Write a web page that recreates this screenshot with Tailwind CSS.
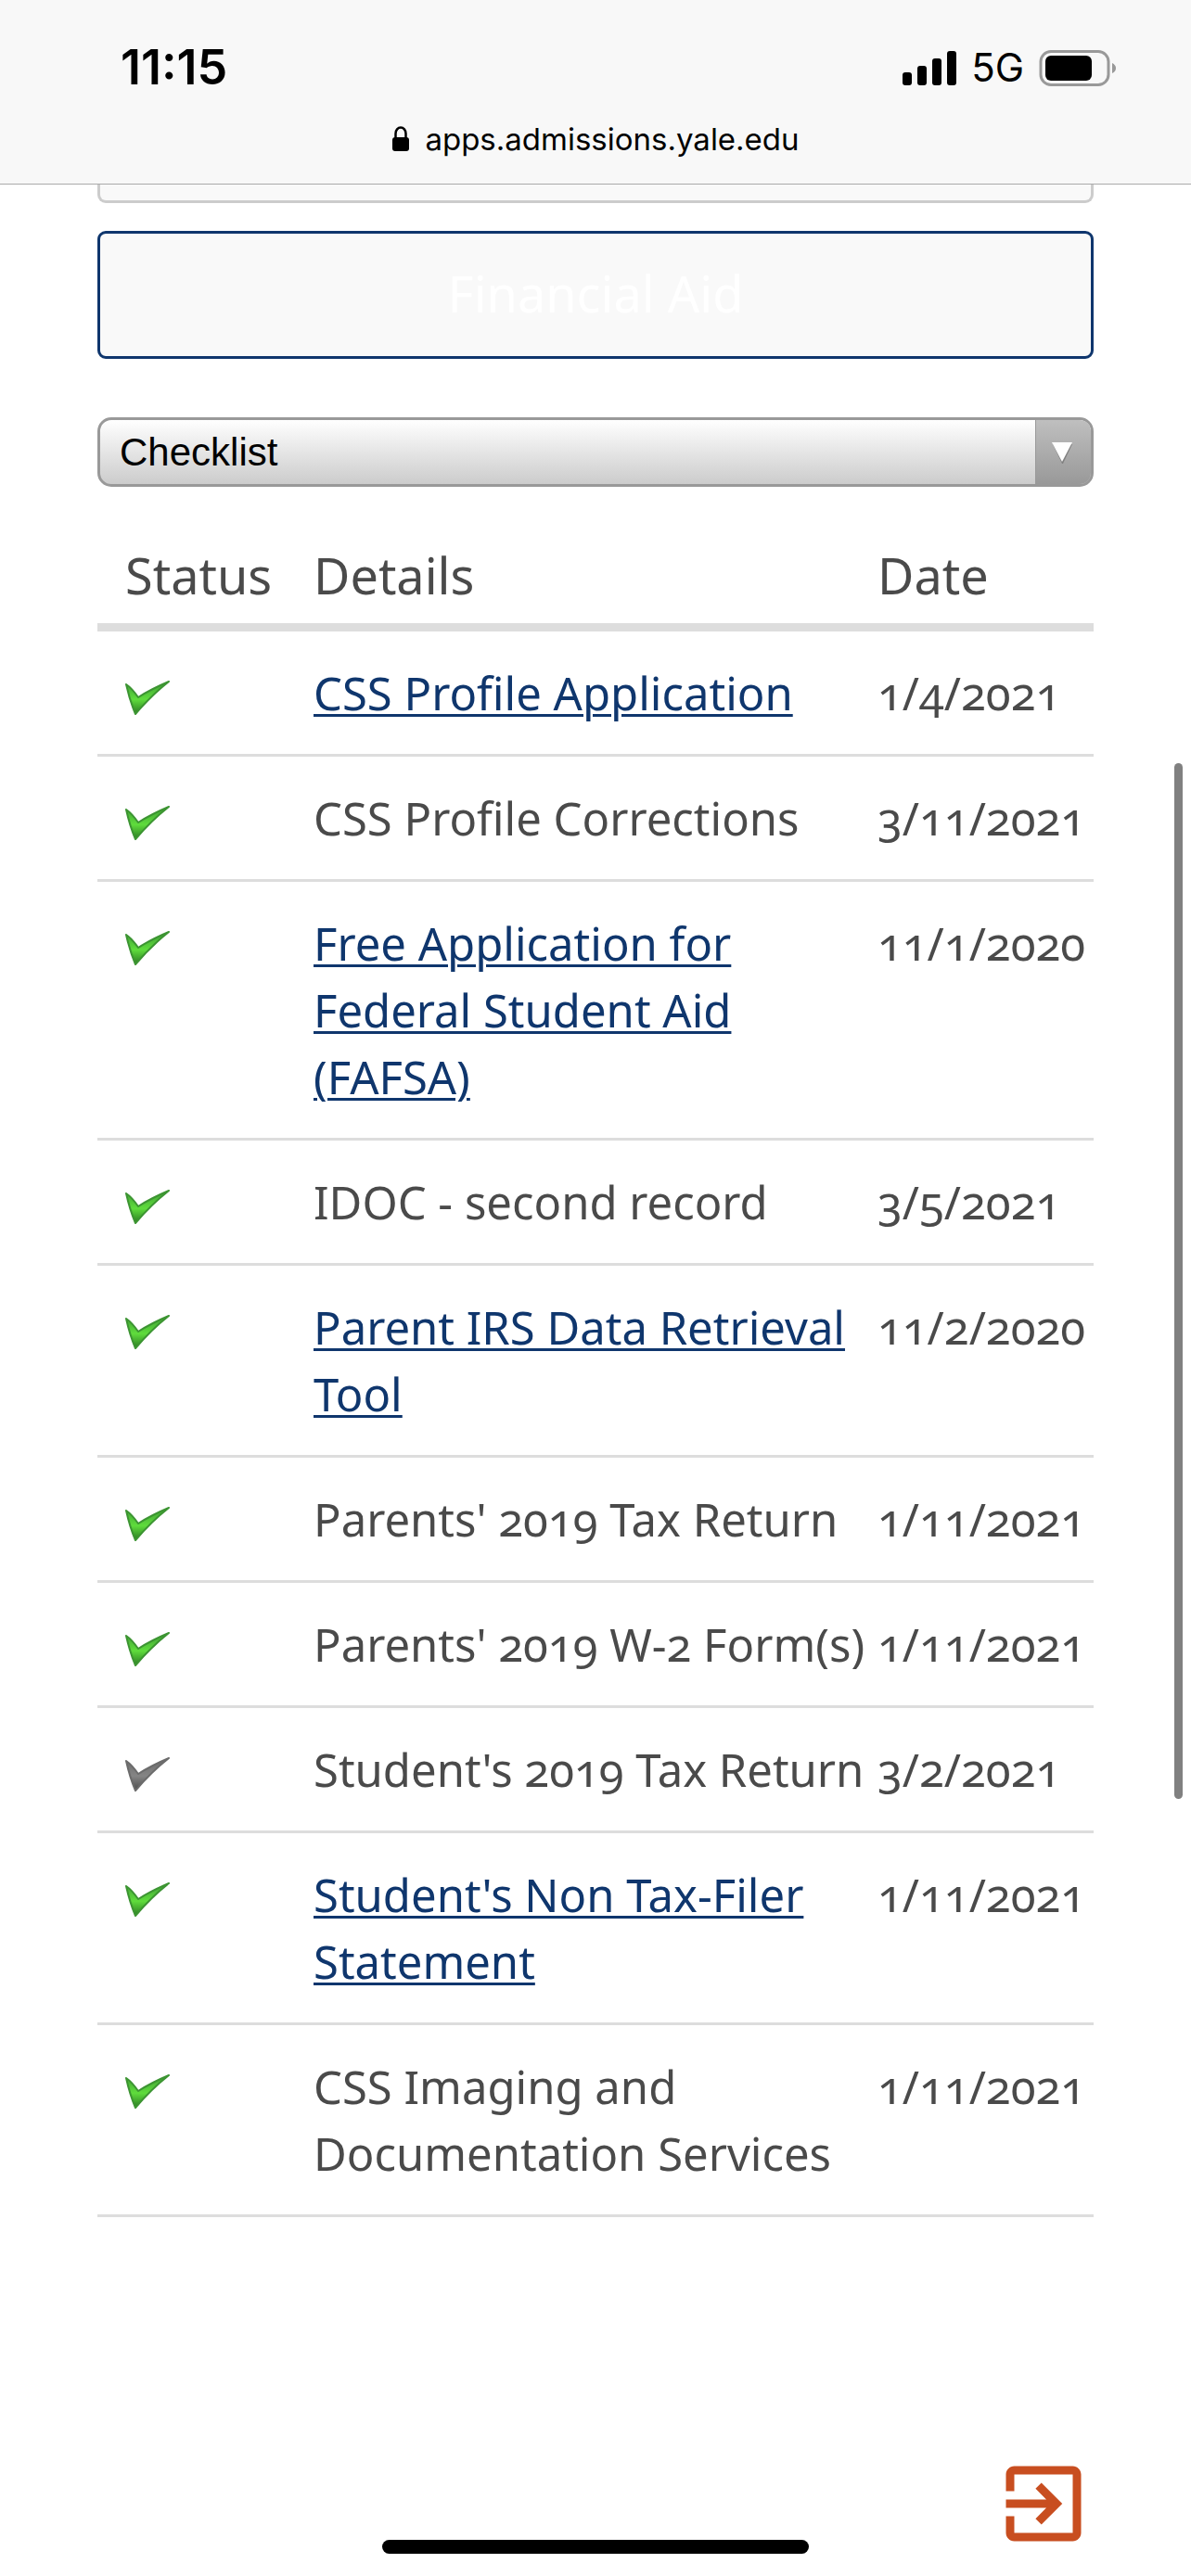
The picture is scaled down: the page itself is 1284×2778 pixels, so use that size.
<!DOCTYPE html>
<html lang="en">
<head>
  <meta charset="UTF-8">
  <meta name="viewport" content="width=device-width, initial-scale=1.0">
  <title>Financial Aid Checklist</title>
  <script src="https://cdn.jsdelivr.net/npm/@tailwindcss/browser@4"></script>
</head>
<body class="relative flex flex-col min-h-screen bg-white text-[#4a4a4a] font-['Noto_Sans',sans-serif] overflow-x-hidden">

  <!-- Shared icons -->
  <svg class="absolute w-0 h-0" aria-hidden="true">
    <defs>
      <linearGradient id="green" x1="0" y1="0" x2="0" y2="1">
        <stop offset="0" stop-color="#3f9e35"/>
        <stop offset="0.55" stop-color="#5fdc3c"/>
        <stop offset="1" stop-color="#2a7a22"/>
      </linearGradient>
      <linearGradient id="gray" x1="0" y1="0" x2="0" y2="1">
        <stop offset="0" stop-color="#6a6a6a"/>
        <stop offset="0.55" stop-color="#858585"/>
        <stop offset="1" stop-color="#4a4a4a"/>
      </linearGradient>
    </defs>
    <symbol id="check-green" viewBox="0 0 48 38">
      <path d="M1 4Q7 8 14 18Q28 9 47 1Q28 16 11 36Q5 22 1 4Z" fill="url(#green)" stroke="#3c9432" stroke-width="2" stroke-linejoin="round"/>
    </symbol>
    <symbol id="check-gray" viewBox="0 0 48 38">
      <path d="M1 4Q7 8 14 18Q28 9 47 1Q28 16 11 36Q5 22 1 4Z" fill="url(#gray)" stroke="#6b6b6b" stroke-width="2" stroke-linejoin="round"/>
    </symbol>
  </svg>

  <!-- Status bar and address -->
  <header class="bg-[#f8f8f8] border-b border-[#aaaaaa] text-black font-['Inter',sans-serif]">
    <div class="flex items-center justify-between pt-9 pl-[130px] pr-20">
      <span class="text-[52px] leading-[74px] font-semibold">11:15</span>
      <div class="flex items-center gap-4">
        <svg class="w-[58px] h-[37px]" viewBox="0 0 58 37" aria-label="Signal">
          <rect x="0" y="23" width="10" height="14" rx="3"/>
          <rect x="16" y="16" width="10" height="21" rx="3"/>
          <rect x="32" y="8" width="10" height="29" rx="3"/>
          <rect x="48" y="0" width="10" height="37" rx="3"/>
        </svg>
        <span class="text-[42px] leading-[74px]">5G</span>
        <svg class="w-[84px] h-[39px]" viewBox="0 0 84 39" aria-label="Battery">
          <rect x="2" y="1.5" width="73" height="36" rx="11" fill="none" stroke="#999" stroke-width="3"/>
          <rect x="7" y="6" width="50" height="27" rx="6"/>
          <path d="M79 14q4 2 4 5.500t-4 5.500z" fill="#999"/>
        </svg>
      </div>
    </div>
    <div class="flex items-center justify-center gap-4 pt-4 pb-6">
      <svg class="w-5 h-7" viewBox="0 0 20 28" aria-label="Secure">
        <path d="M4.500 13V8a5.500 6.500 0 0 1 11 0v5" fill="none" stroke="#000" stroke-width="2.500"/>
        <rect x="1" y="12" width="18" height="15" rx="3"/>
      </svg>
      <span class="text-[33px] leading-[48px]">apps.admissions.yale.edu</span>
    </div>
  </header>

  <main class="px-[105px]">
    <!-- Previous card, scrolled under the address bar -->
    <div class="h-5 bg-[#f9f9f9] border-x-3 border-b-3 border-[#cccccc] rounded-b-[9px]"></div>

    <button class="block w-full mt-[30px] pt-7 pb-8 bg-[#f9f9f9] border-3 border-[#0f366d] rounded-[9px] text-[54px] leading-[72px] text-white">Financial Aid</button>

    <div class="relative mt-[63px]">
      <select aria-label="Section" class="block w-full h-[75px] pl-[21px] appearance-none border-3 border-[#999999] rounded-[15px] bg-linear-to-b from-white to-[#cccccc] text-black text-[42px] font-['Liberation_Sans',Arial,sans-serif]">
        <option>Checklist</option>
      </select>
      <span class="absolute inset-y-[3px] right-[3px] flex items-center justify-center w-[60px] pr-1 rounded-r-xl border-l border-[#999999] bg-linear-to-b from-[#bfbfbf] to-[#999999] pointer-events-none">
        <svg class="w-6 h-6" viewBox="0 0 24 24"><path d="M2 3h21L12.500 25z" fill="#808080"/><path d="M1 1h22L12 22z" fill="#fff"/></svg>
      </span>
    </div>

    <table class="w-full mt-[59px] table-fixed text-[49px] leading-[72px]">
      <colgroup>
        <col class="w-[233px]">
        <col>
        <col class="w-[233px]">
      </colgroup>
      <thead class="text-[54px] text-left border-b-9 border-[#dddddd]">
        <tr>
          <th class="pl-[30px] pb-4 font-normal">Status</th>
          <th class="pb-4 font-normal">Details</th>
          <th class="pb-4 font-normal">Date</th>
        </tr>
      </thead>
      <tbody class="align-top [font-variant-numeric:oldstyle-nums]">
        <tr class="border-b-3 border-[#dddddd]">
          <td class="pl-[30px] pt-[53px]"><svg class="w-12 h-[38px]" role="img" aria-label="Received"><use href="#check-green"/></svg></td>
          <td class="py-[30px]"><a href="#" class="text-[#0f366d] underline decoration-3 underline-offset-4">CSS Profile Application</a></td>
          <td class="py-[30px] whitespace-nowrap">1/4/2021</td>
        </tr>
        <tr class="border-b-3 border-[#dddddd]">
          <td class="pl-[30px] pt-[53px]"><svg class="w-12 h-[38px]" role="img" aria-label="Received"><use href="#check-green"/></svg></td>
          <td class="py-[30px]">CSS Profile Corrections</td>
          <td class="py-[30px] whitespace-nowrap">3/11/2021</td>
        </tr>
        <tr class="border-b-3 border-[#dddddd]">
          <td class="pl-[30px] pt-[53px]"><svg class="w-12 h-[38px]" role="img" aria-label="Received"><use href="#check-green"/></svg></td>
          <td class="py-[30px]"><a href="#" class="text-[#0f366d] underline decoration-3 underline-offset-4">Free Application for Federal Student Aid (FAFSA)</a></td>
          <td class="py-[30px] whitespace-nowrap">11/1/2020</td>
        </tr>
        <tr class="border-b-3 border-[#dddddd]">
          <td class="pl-[30px] pt-[53px]"><svg class="w-12 h-[38px]" role="img" aria-label="Received"><use href="#check-green"/></svg></td>
          <td class="py-[30px]">IDOC - second record</td>
          <td class="py-[30px] whitespace-nowrap">3/5/2021</td>
        </tr>
        <tr class="border-b-3 border-[#dddddd]">
          <td class="pl-[30px] pt-[53px]"><svg class="w-12 h-[38px]" role="img" aria-label="Received"><use href="#check-green"/></svg></td>
          <td class="py-[30px]"><a href="#" class="text-[#0f366d] underline decoration-3 underline-offset-4">Parent IRS Data Retrieval Tool</a></td>
          <td class="py-[30px] whitespace-nowrap">11/2/2020</td>
        </tr>
        <tr class="border-b-3 border-[#dddddd]">
          <td class="pl-[30px] pt-[53px]"><svg class="w-12 h-[38px]" role="img" aria-label="Received"><use href="#check-green"/></svg></td>
          <td class="py-[30px] whitespace-nowrap">Parents' 2019 Tax Return</td>
          <td class="py-[30px] whitespace-nowrap">1/11/2021</td>
        </tr>
        <tr class="border-b-3 border-[#dddddd]">
          <td class="pl-[30px] pt-[53px]"><svg class="w-12 h-[38px]" role="img" aria-label="Received"><use href="#check-green"/></svg></td>
          <td class="py-[30px] whitespace-nowrap">Parents' 2019 W-2 Form(s)</td>
          <td class="py-[30px] whitespace-nowrap">1/11/2021</td>
        </tr>
        <tr class="border-b-3 border-[#dddddd]">
          <td class="pl-[30px] pt-[53px]"><svg class="w-12 h-[38px]" role="img" aria-label="Waived"><use href="#check-gray"/></svg></td>
          <td class="py-[30px] whitespace-nowrap">Student's 2019 Tax Return</td>
          <td class="py-[30px] whitespace-nowrap">3/2/2021</td>
        </tr>
        <tr class="border-b-3 border-[#dddddd]">
          <td class="pl-[30px] pt-[53px]"><svg class="w-12 h-[38px]" role="img" aria-label="Received"><use href="#check-green"/></svg></td>
          <td class="py-[30px]"><a href="#" class="text-[#0f366d] underline decoration-3 underline-offset-4">Student's Non Tax-Filer Statement</a></td>
          <td class="py-[30px] whitespace-nowrap">1/11/2021</td>
        </tr>
        <tr class="border-b-3 border-[#dddddd]">
          <td class="pl-[30px] pt-[53px]"><svg class="w-12 h-[38px]" role="img" aria-label="Received"><use href="#check-green"/></svg></td>
          <td class="py-[30px]">CSS Imaging and Documentation Services</td>
          <td class="py-[30px] whitespace-nowrap">1/11/2021</td>
        </tr>
      </tbody>
    </table>
  </main>

  <footer class="relative flex justify-end mt-auto px-[105px] pb-6">
    <a href="#" aria-label="Log out">
      <svg class="w-[108px] h-[108px]" viewBox="0 0 24 24" fill="#c84e20">
        <path d="M10.090 15.590L11.500 17l5-5-5-5-1.410 1.410L12.670 11H3v2h9.670l-2.580 2.590zM19 3H5c-1.110 0-2 .9-2 2v4h2V5h14v14H5v-4H3v4c0 1.100.89 2 2 2h14c1.100 0 2-.9 2-2V5c0-1.100-.9-2-2-2z"/>
      </svg>
    </a>
    <!-- Home indicator -->
    <div class="absolute bottom-6 left-1/2 w-[460px] h-[15px] -translate-x-1/2 rounded-full bg-black"></div>
  </footer>

  <!-- Scroll thumb -->
  <div class="absolute top-[823px] right-[9px] w-[9px] h-[1117px] rounded-full bg-[#808080]"></div>

</body>
</html>
